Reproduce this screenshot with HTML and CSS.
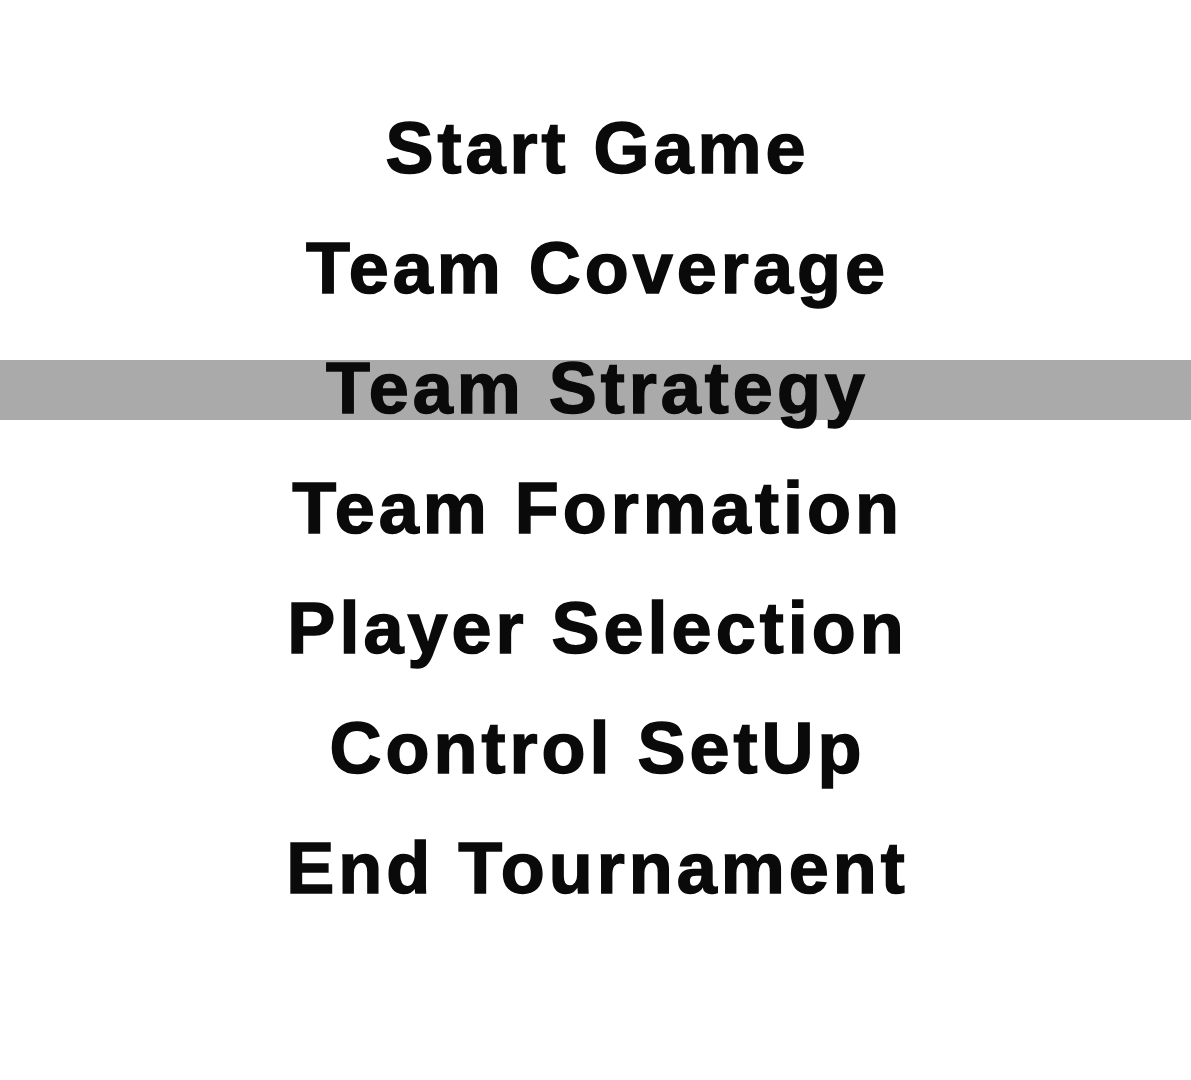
FILE: index.html
```html
<!DOCTYPE html>
<html lang="en">
<head>
<meta charset="utf-8">
<title>Tournament Menu</title>
<link rel="stylesheet" href="styles.css">
</head>
<body>
<main class="screen">
  <ul class="menu">
    <li class="menu-item">Start Game</li>
    <li class="menu-item">Team Coverage</li>
    <li class="menu-item is-selected">Team Strategy</li>
    <li class="menu-item">Team Formation</li>
    <li class="menu-item">Player Selection</li>
    <li class="menu-item">Control SetUp</li>
    <li class="menu-item">End Tournament</li>
  </ul>
</main>
</body>
</html>
```

FILE: styles.css
```css
html, body {
  margin: 0;
  padding: 0;
  background: #ffffff;
}

.screen {
  width: 1191px;
  height: 1080px;
  padding-top: 120px;
  box-sizing: border-box;
  overflow: hidden;
}

.menu {
  list-style: none;
  margin: 0;
  padding: 0;
  display: flex;
  flex-direction: column;
  gap: 60px;
}

/* each row is one 8px tile row of the handheld screen, scaled up */
.menu-item {
  height: 60px;
  box-sizing: border-box;
  padding: 1px 0 5px 4px;
  line-height: 54px;
  text-align: center;
  font-family: "Liberation Sans", Arial, sans-serif;
  font-weight: 700;
  font-size: 72px;
  letter-spacing: 4px;
  -webkit-text-stroke: 1.5px #0a0a0a;
  color: #0a0a0a;
  white-space: nowrap;
}

.menu-item.is-selected {
  background: #aaaaaa;
}
```
